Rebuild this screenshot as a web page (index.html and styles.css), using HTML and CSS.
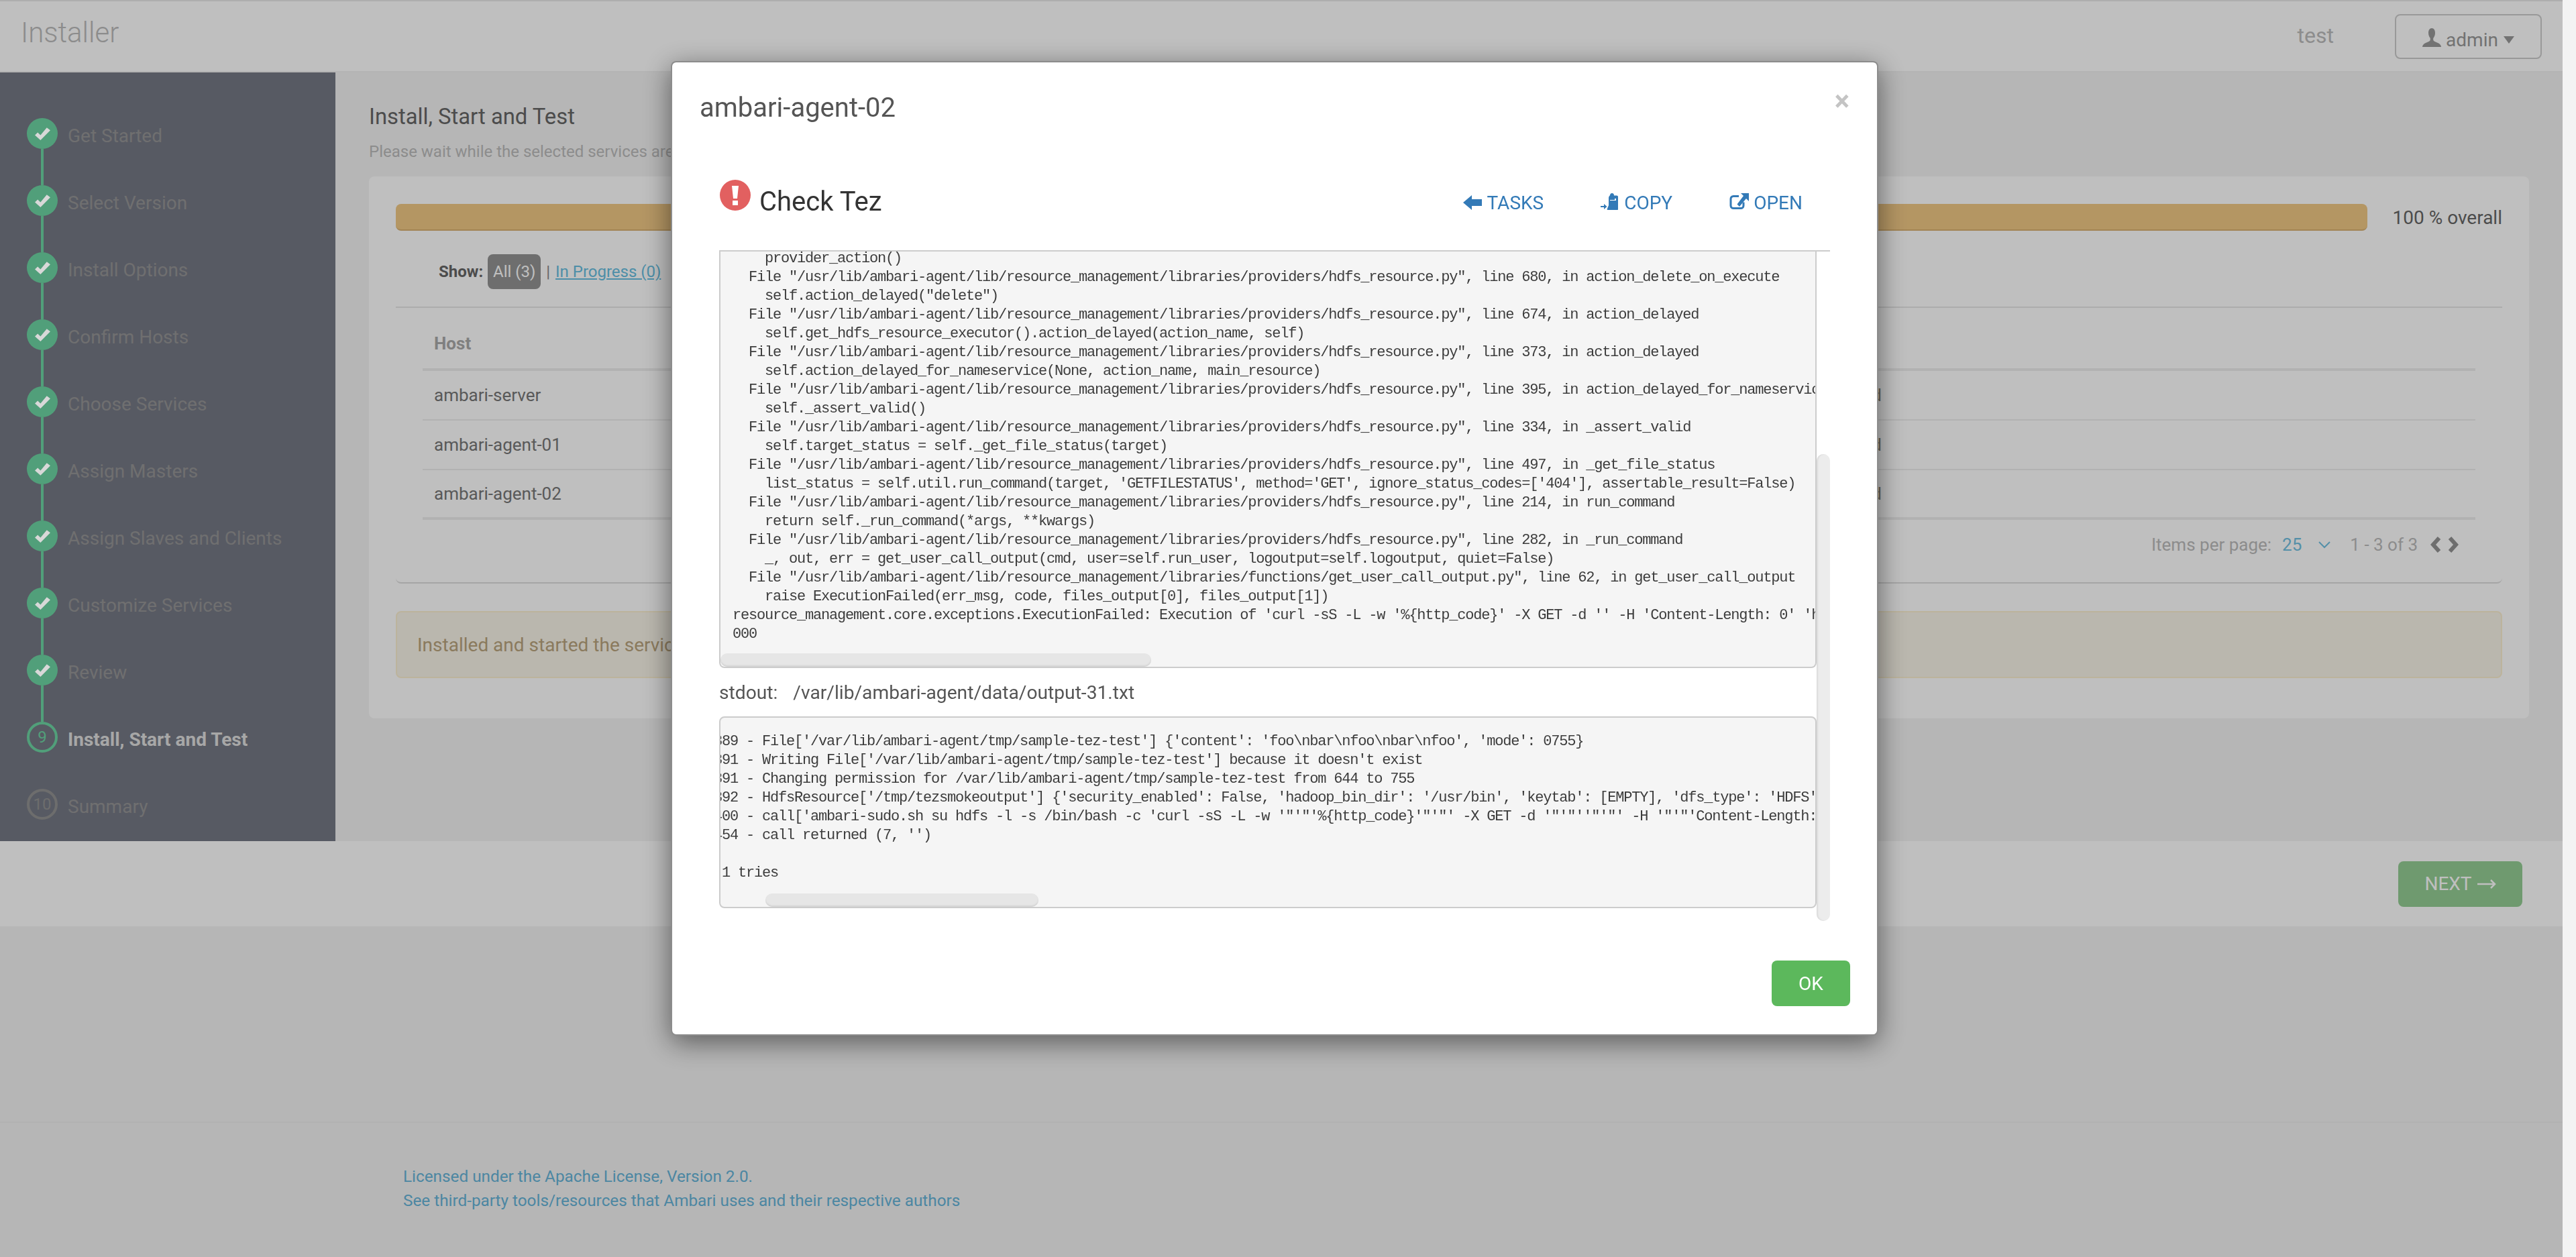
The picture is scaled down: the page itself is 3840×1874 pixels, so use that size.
FILE: index.html
```html
<!DOCTYPE html>
<html lang="en">
<head>
<meta charset="utf-8">
<title>Installer</title>
<link rel="stylesheet" href="styles.css">
</head>
<body>
<div class="page">
  <header class="nav">
    <div class="brand">Installer</div>
    <div class="nav-right">
      <span class="cluster">test</span>
      <button class="user-btn">
        <svg class="user-icon" viewBox="0 0 28 28"><path d="M14 0c3.200 0 5 3 5 7 0 3.500-1.300 6-2.500 7.500-.5 1-.5 3.500.5 4.500 1.500 1.300 6 2.500 8 4 1.500 1 3 3 3 5H0c0-2 1.500-4 3-5 2-1.500 6.500-2.700 8-4 1-1 1-3.500.5-4.500C10.300 13 9 10.500 9 7c0-4 1.800-7 5-7z"/></svg>
        <span>admin</span><span class="caret"></span>
      </button>
    </div>
  </header>

  <div class="wizard">
    <aside class="steps">
      <div class="step done"><span class="dot"><svg viewBox="0 0 24 20"><path d="M1 12l4-4 4 4L18 1l5 4L9 19z"/></svg></span><span class="step-label">Get Started</span></div>
      <div class="step done"><span class="dot"><svg viewBox="0 0 24 20"><path d="M1 12l4-4 4 4L18 1l5 4L9 19z"/></svg></span><span class="step-label">Select Version</span></div>
      <div class="step done"><span class="dot"><svg viewBox="0 0 24 20"><path d="M1 12l4-4 4 4L18 1l5 4L9 19z"/></svg></span><span class="step-label">Install Options</span></div>
      <div class="step done"><span class="dot"><svg viewBox="0 0 24 20"><path d="M1 12l4-4 4 4L18 1l5 4L9 19z"/></svg></span><span class="step-label">Confirm Hosts</span></div>
      <div class="step done"><span class="dot"><svg viewBox="0 0 24 20"><path d="M1 12l4-4 4 4L18 1l5 4L9 19z"/></svg></span><span class="step-label">Choose Services</span></div>
      <div class="step done"><span class="dot"><svg viewBox="0 0 24 20"><path d="M1 12l4-4 4 4L18 1l5 4L9 19z"/></svg></span><span class="step-label">Assign Masters</span></div>
      <div class="step done"><span class="dot"><svg viewBox="0 0 24 20"><path d="M1 12l4-4 4 4L18 1l5 4L9 19z"/></svg></span><span class="step-label">Assign Slaves and Clients</span></div>
      <div class="step done"><span class="dot"><svg viewBox="0 0 24 20"><path d="M1 12l4-4 4 4L18 1l5 4L9 19z"/></svg></span><span class="step-label">Customize Services</span></div>
      <div class="step done"><span class="dot"><svg viewBox="0 0 24 20"><path d="M1 12l4-4 4 4L18 1l5 4L9 19z"/></svg></span><span class="step-label">Review</span></div>
      <div class="step active"><span class="dot">9</span><span class="step-label">Install, Start and Test</span></div>
      <div class="step todo"><span class="dot">10</span><span class="step-label">Summary</span></div>
    </aside>

    <main class="main">
      <h2 class="main-title">Install, Start and Test</h2>
      <p class="main-sub">Please wait while the selected services are installed and started.</p>
      <section class="card">
        <div class="progress-row">
          <div class="progress"></div>
          <span class="overall">100 % overall</span>
        </div>
        <div class="panel">
          <div class="filters">
            <b>Show:</b><span class="pill">All (3)</span><span class="sep">|</span><a class="link">In Progress (0)</a>
          </div>
          <div class="table">
            <div class="tr th"><span>Host</span><span>Status</span></div>
            <div class="tr"><span>ambari-server</span><span class="status">Warnings encountered</span></div>
            <div class="tr"><span>ambari-agent-01</span><span class="status">Warnings encountered</span></div>
            <div class="tr last"><span>ambari-agent-02</span><span class="status">Warnings encountered</span></div>
          </div>
          <div class="pager">
            <span class="pager-label">Items per page:</span>
            <span class="pager-size">25</span>
            <svg class="pager-chev" viewBox="0 0 18 12"><path d="M1 2l8 8 8-8"/></svg>
            <span class="pager-count">1 - 3 of 3</span>
            <svg class="pager-nav" viewBox="0 0 42 26"><path d="M13 3L4 13l9 10M29 3l9 10-9 10"/></svg>
          </div>
        </div>
        <div class="alert">Installed and started the services with some warnings.</div>
      </section>
    </main>
  </div>

  <div class="wizard-foot">
    <button class="next">NEXT <svg viewBox="0 0 28 14"><path d="M0 7h26M20 1l6 6-6 6"/></svg></button>
  </div>

  <footer class="foot">
    <a class="foot-link">Licensed under the Apache License, Version 2.0.</a>
    <a class="foot-link">See third-party tools/resources that Ambari uses and their respective authors</a>
  </footer>
</div>

<div class="backdrop"></div>

<div class="modal">
  <div class="modal-head">
    <h4 class="modal-title">ambari-agent-02</h4>
    <span class="close">&times;</span>
  </div>
  <div class="task-head">
    <div class="task-name">
      <svg class="err" viewBox="0 0 46 46"><circle cx="23" cy="23" r="23"/><path class="err-mark" d="M18 9h10l-2 19h-6zM19 31h8v7h-8z"/></svg>
      <span>Check Tez</span>
    </div>
    <div class="task-actions">
      <a class="act"><svg class="ic-tasks" viewBox="0 0 28 22"><path d="M13 0v6h15v10H13v6L0 11z"/></svg>TASKS</a>
      <a class="act"><svg class="ic-copy" viewBox="0 0 26 25"><path fill-rule="evenodd" d="M17 0c2 0 3 1.200 3 3.500h4c1.200 0 2 .8 2 2V24c0 .6-.4 1-1 1H10.500c-.8 0-1-.8-.7-1.500L12 18V7c0-1 .4-2 1.500-3.500H14C14 1.200 15 0 17 0zM14 8v3h9V8h-2v2h-7z"/><path d="M0 19h5v-3l4.500 4L5 24v-3H0z"/></svg>COPY</a>
      <a class="act"><svg class="ic-open" viewBox="0 0 29 25"><path class="open-box" d="M14 4.500H6a4 4 0 0 0-4 4v10a4 4 0 0 0 4 4h11a4 4 0 0 0 4-4v-5"/><path d="M17 0h12v12l-4-4-10 12-3.500-3.500L21 4z"/></svg>OPEN</a>
    </div>
  </div>

  <div class="log-scroll">
    <div class="log log-err"><pre>    provider_action()
  File "/usr/lib/ambari-agent/lib/resource_management/libraries/providers/hdfs_resource.py", line 680, in action_delete_on_execute
    self.action_delayed("delete")
  File "/usr/lib/ambari-agent/lib/resource_management/libraries/providers/hdfs_resource.py", line 674, in action_delayed
    self.get_hdfs_resource_executor().action_delayed(action_name, self)
  File "/usr/lib/ambari-agent/lib/resource_management/libraries/providers/hdfs_resource.py", line 373, in action_delayed
    self.action_delayed_for_nameservice(None, action_name, main_resource)
  File "/usr/lib/ambari-agent/lib/resource_management/libraries/providers/hdfs_resource.py", line 395, in action_delayed_for_nameservice
    self._assert_valid()
  File "/usr/lib/ambari-agent/lib/resource_management/libraries/providers/hdfs_resource.py", line 334, in _assert_valid
    self.target_status = self._get_file_status(target)
  File "/usr/lib/ambari-agent/lib/resource_management/libraries/providers/hdfs_resource.py", line 497, in _get_file_status
    list_status = self.util.run_command(target, 'GETFILESTATUS', method='GET', ignore_status_codes=['404'], assertable_result=False)
  File "/usr/lib/ambari-agent/lib/resource_management/libraries/providers/hdfs_resource.py", line 214, in run_command
    return self._run_command(*args, **kwargs)
  File "/usr/lib/ambari-agent/lib/resource_management/libraries/providers/hdfs_resource.py", line 282, in _run_command
    _, out, err = get_user_call_output(cmd, user=self.run_user, logoutput=self.logoutput, quiet=False)
  File "/usr/lib/ambari-agent/lib/resource_management/libraries/functions/get_user_call_output.py", line 62, in get_user_call_output
    raise ExecutionFailed(err_msg, code, files_output[0], files_output[1])
resource_management.core.exceptions.ExecutionFailed: Execution of 'curl -sS -L -w '%{http_code}' -X GET -d '' -H 'Content-Length: 0' 'http://ambari-server:50070/webhdfs/v1/tmp/tezsmokeoutput'' returned 7.
000</pre><span class="thumb-h thumb-err"></span></div>
    <div class="stdout-label">stdout:<span class="stdout-path">/var/lib/ambari-agent/data/output-31.txt</span></div>
    <div class="log log-out"><pre>2018-06-13 01:38:42,389 - File['/var/lib/ambari-agent/tmp/sample-tez-test'] {'content': 'foo\nbar\nfoo\nbar\nfoo', 'mode': 0755}
2018-06-13 01:38:42,391 - Writing File['/var/lib/ambari-agent/tmp/sample-tez-test'] because it doesn't exist
2018-06-13 01:38:42,391 - Changing permission for /var/lib/ambari-agent/tmp/sample-tez-test from 644 to 755
2018-06-13 01:38:42,392 - HdfsResource['/tmp/tezsmokeoutput'] {'security_enabled': False, 'hadoop_bin_dir': '/usr/bin', 'keytab': [EMPTY], 'dfs_type': 'HDFS', 'default_fs': 'hdfs://ambari-server:8020'}
2018-06-13 01:38:42,400 - call['ambari-sudo.sh su hdfs -l -s /bin/bash -c 'curl -sS -L -w '"'"'%{http_code}'"'"' -X GET -d '"'"''"'"' -H '"'"'Content-Length: 0'"'"''] {}
2018-06-13 01:38:42,454 - call returned (7, '')

Command failed after 1 tries</pre><span class="thumb-h thumb-out"></span></div>
    <span class="thumb-v"></span>
  </div>

  <div class="modal-foot"><button class="ok">OK</button></div>
</div>
</body>
</html>
```

FILE: styles.css
```css
* { box-sizing: border-box; }
html, body { margin: 0; height: 100%; overflow: hidden; }
body { font-family: Roboto, "Liberation Sans", sans-serif; font-size: 28px; color: #333; background: #f3f3f3; }
button { font-family: inherit; }

.page { width: 3820px; height: 1874px; display: flex; flex-direction: column; border-top: 2px solid #e8e8e8; }

.nav { height: 106px; flex: none; display: flex; align-items: center; justify-content: space-between; background: #fff; border-bottom: 2px solid #f0f0f0; padding: 0 31px; }
.brand { font-size: 42px; font-weight: 300; color: #bbb; margin-top: -12px; }
.nav-right { display: flex; align-items: center; gap: 91px; }
.cluster { font-size: 32px; color: #bbb; margin-top: -2px; }
.user-btn { width: 219px; height: 67px; display: flex; align-items: center; justify-content: center; gap: 7px; background: #fff; border: 2px solid #ccc; border-radius: 8px; font-size: 28px; color: #999; padding: 10px 0 0; }
.user-icon { width: 28px; height: 28px; fill: #999; margin-top: -6px; }
.caret { width: 0; height: 0; border: 8px solid transparent; border-top: 11px solid #999; border-bottom: 0; margin-left: 1px; }

.wizard { height: 1146px; flex: none; display: flex; }
.steps { width: 500px; flex: none; background: #757984; padding-top: 68px; }
.step { height: 100px; display: flex; align-items: flex-start; padding-left: 40px; position: relative; }
.dot { width: 46px; height: 46px; flex: none; border-radius: 50%; display: flex; align-items: center; justify-content: center; font-size: 24px; }
.dot svg { width: 25px; height: 21px; fill: #d8d8d8; position: relative; z-index: 1; }
.done .dot { background: #6dd5a3; }
.done::after { content: ""; position: absolute; left: 61px; top: 46px; width: 4px; height: 54px; background: #6dd5a3; }
.active .dot { border: 4px solid #6dd5a3; color: #6dd5a3; }
.todo .dot { border: 4px solid #929292; color: #929292; }
.step-label { margin-left: 15px; font-size: 28px; line-height: 46px; padding-top: 4px; color: #959596; white-space: nowrap; }
.active .step-label { font-weight: 700; color: #dfdfdf; }

.main { flex: 1; min-width: 0; padding: 46px 50px 0; }
.main-title { margin: 0; font-size: 32.800px; font-weight: 400; line-height: 41px; color: #666; }
.main-sub { margin: 15px 0 0; font-size: 24px; line-height: 32px; color: #bbb; }
.card { margin-top: 21px; height: 808px; background: #fff; border-radius: 8px; padding: 41px 40px 0; }
.progress-row { display: flex; align-items: center; justify-content: space-between; height: 40px; }
.progress { width: 2939px; height: 40px; background: #f0c885; border-bottom: 2px solid #d8b070; border-radius: 8px; }
.overall { font-size: 28px; color: #666; white-space: nowrap; }

.panel { height: 526px; border-bottom: 2px solid #ddd; border-radius: 0 0 8px 8px; }
.filters { height: 115px; padding: 35px 0 0 64px; display: flex; align-items: flex-start; font-size: 24px; border-bottom: 2px solid #e6e6e6; line-height: 52px; }
.filters b { color: #666; margin-right: 7px; }
.pill { width: 79px; height: 52px; background: #939393; border-radius: 8px; color: #fff; text-align: center; }
.sep { margin: 0 8px; color: #888; }
.link { color: #67bee0; text-decoration: underline; }

.table { margin: 0 40px; }
.tr { height: 74px; display: grid; grid-template-columns: 1320px 838px; align-items: center; padding-left: 17px; border-bottom: 2px solid #eee; color: #777; font-size: 26px; }
.tr.th { height: 94px; padding-top: 16px; border-bottom-width: 4px; font-weight: 700; color: #aaa; }
.tr.last { border-bottom-width: 4px; }
.status { text-align: right; color: #8e8670; }
.th span:last-child { visibility: hidden; }

.pager { height: 74px; display: flex; align-items: center; padding-left: 2617px; font-size: 26px; color: #bbb; }
.pager-size { margin-left: 16px; color: #70c0e0; font-size: 26px; }
.pager-chev { width: 18px; height: 12px; margin-left: 25px; fill: none; stroke: #70c0e0; stroke-width: 2; }
.pager-count { margin-left: 29px; font-size: 26px; }
.pager-nav { width: 42px; height: 26px; margin-left: 19px; fill: none; stroke: #939393; stroke-width: 6; }

.alert { margin-top: 41px; height: 100px; background: #f8f4e8; border: 2px solid #fbefd0; border-radius: 8px; color: #b8a37d; padding-left: 30px; line-height: 98px; }

.wizard-foot { height: 127px; flex: none; display: flex; align-items: center; justify-content: flex-end; background: #fff; padding: 0 60px 0 0; }
.next { width: 185px; height: 68px; display: flex; align-items: center; justify-content: center; gap: 8px; background: #94ce94; border: 0; border-radius: 8px; color: #fff; font-size: 28px; padding: 0; }
.next svg { width: 28px; height: 14px; fill: none; stroke: #fff; stroke-width: 2.500; }

.foot { margin-top: 291px; flex: 1; border-top: 2px solid #eee; padding: 62px 0 0 601px; display: flex; flex-direction: column; }
.foot-link { font-size: 24.300px; line-height: 36px; color: #66b4d9; }

.backdrop { position: fixed; left: 0; top: 0; width: 3820px; height: 1874px; background: rgba(0, 0, 0, .25); }

.modal { position: fixed; z-index: 2; left: 1000px; top: 91px; width: 1800px; height: 1453px; background: #fff; border: 2px solid rgba(0, 0, 0, .45); border-radius: 8px; box-shadow: 0 10px 40px rgba(0, 0, 0, .5); display: flex; flex-direction: column; padding: 0 40px 0 70px; }
.modal-head { height: 130px; flex: none; position: relative; }
.modal-title { margin: 0 0 0 -29px; padding-top: 43px; font-size: 40px; font-weight: 400; line-height: 50px; color: #555; }
.close { position: absolute; right: 1px; top: 36px; font-size: 42px; line-height: 44px; font-weight: 700; color: #c4c4c4; }

.task-head { height: 150px; flex: none; display: flex; justify-content: space-between; padding: 45px 39px 0 1px; width: 1654px; }
.task-name { display: flex; align-items: flex-start; font-size: 40px; color: #333; line-height: 52px; gap: 13px; }
.task-name span { margin-top: 7px; }
.err { width: 46px; height: 46px; fill: #e26060; }
.err-mark { fill: #fff; }
.task-actions { display: flex; gap: 85px; padding-top: 14px; }
.act { display: flex; align-items: center; gap: 7px; height: 40px; font-size: 28px; color: #337ab7; }
.act svg { fill: #337ab7; }
.ic-tasks { width: 28px; height: 22px; }
.ic-copy { width: 26px; height: 25px; margin: -4px 2px 0 0; }
.ic-open { width: 29px; height: 25px; margin-top: -4px; }
.act .open-box { fill: none; stroke: #337ab7; stroke-width: 3; }

.log-scroll { width: 1656px; height: 1000px; flex: none; position: relative; border-top: 2px solid #ccc; overflow: hidden; }
.log { width: 1636px; background: #f5f5f5; border: 2px solid #ccc; position: relative; overflow: hidden; }
.log pre { margin: 0; font-family: "Liberation Mono", monospace; font-size: 22px; line-height: 28px; color: #3c3c3c; letter-spacing: -1.200px; }
.log-err { height: 621px; border-top: 0; border-radius: 0 0 8px 8px; padding: 0 20px 0 18px; }
.log-err pre { margin-top: -3px; }
.log-out { height: 286px; border-radius: 8px; padding: 22px 20px 0; }
.log-out pre { margin-left: -270px; }
.stdout-label { height: 72px; padding-top: 3px; line-height: 68px; font-size: 28.200px; color: #555; }
.stdout-path { margin-left: 23px; }
.thumb-h { position: absolute; height: 20px; bottom: 0; border-radius: 10px; background: #e6e6e6; box-shadow: inset 0 -2px 2px #d4d4d4; }
.thumb-err { left: 0; width: 642px; }
.thumb-out { left: 67px; width: 407px; }
.thumb-v { position: absolute; right: 0; top: 302px; width: 20px; height: 696px; border-radius: 10px; background: #ececec; box-shadow: inset 2px 0 2px #dcdcdc; }

.modal-foot { flex: 1; display: flex; justify-content: flex-end; padding-top: 59px; }
.ok { width: 117px; height: 68px; background: #5cb85c; border: 0; border-radius: 8px; color: #fff; font-size: 28px; }
```
